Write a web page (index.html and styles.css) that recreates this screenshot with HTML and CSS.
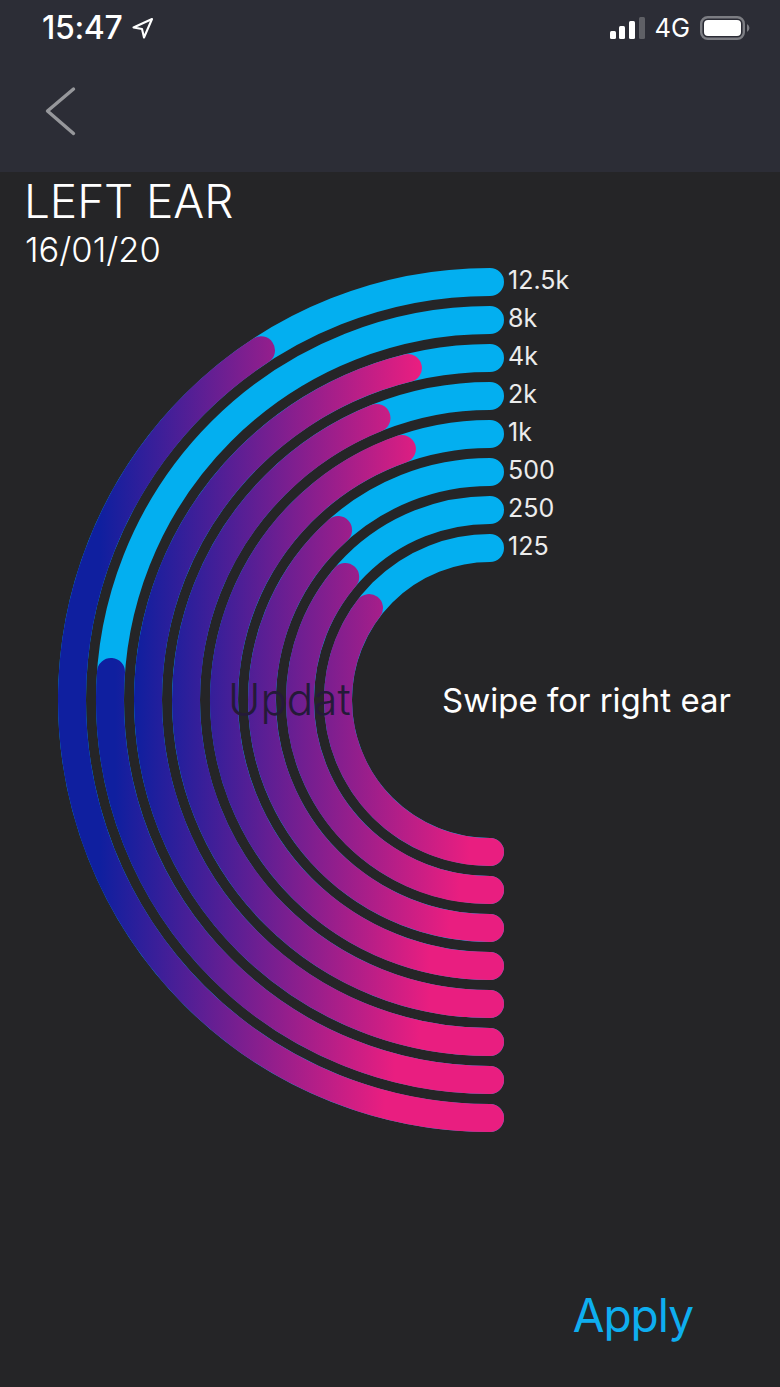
FILE: index.html
```html
<!DOCTYPE html>
<html lang="en">
<head>
<meta charset="utf-8">
<title>Left ear</title>
<link rel="stylesheet" href="styles.css">
</head>
<body>
<div class="phone">
  <header class="topbar">
    <div class="status">
      <div class="status-left">
        <span class="clock">15:47</span>
        <svg class="loc" viewBox="0 0 24 24" width="24" height="24"><path d="M3.5 11.5 L22 3 L14 21.5 L12 13 Z" fill="none" stroke="#fff" stroke-width="2.1" stroke-linejoin="round"/></svg>
      </div>
      <div class="status-right">
        <div class="signal"><i class="b1"></i><i class="b2"></i><i class="b3"></i><i class="b4"></i></div>
        <span class="net">4G</span>
        <svg class="batt" viewBox="0 0 50 24" width="50" height="24"><rect x="1.2" y="1.2" width="42.6" height="21.6" rx="6.5" fill="none" stroke="#7c7d83" stroke-width="2.4"/><rect x="4" y="4" width="37" height="16" rx="4" fill="#fff"/><path d="M47 8 a4.5 4.5 0 0 1 0 8 Z" fill="#7c7d83"/></svg>
      </div>
    </div>
    <div class="nav">
      <svg class="back" viewBox="0 0 34 52" width="34" height="52"><path d="M29.5 3 L3.5 25 L29.5 47.5" fill="none" stroke="#96979b" stroke-width="3.4" stroke-linecap="round" stroke-linejoin="round"/></svg>
    </div>
  </header>
  <main class="content">
    <h1 class="title">LEFT EAR</h1>
    <p class="date">16/01/20</p>
    <section class="stage">
      <svg class="rings" viewBox="0 0 780 1387" width="780" height="1387" aria-hidden="true">
        <defs>
          <linearGradient id="g1" gradientUnits="userSpaceOnUse" x1="100" y1="0" x2="385" y2="0"><stop offset="0" stop-color="#0f1f9f"/><stop offset="1" stop-color="#e91e80"/></linearGradient>
          <linearGradient id="g2" gradientUnits="userSpaceOnUse" x1="115" y1="0" x2="395" y2="0"><stop offset="0" stop-color="#0f1f9f"/><stop offset="1" stop-color="#e91e80"/></linearGradient>
          <linearGradient id="g3" gradientUnits="userSpaceOnUse" x1="135" y1="0" x2="420" y2="0"><stop offset="0" stop-color="#0f1f9f"/><stop offset="1" stop-color="#e91e80"/></linearGradient>
          <linearGradient id="g4" gradientUnits="userSpaceOnUse" x1="150" y1="0" x2="430" y2="0"><stop offset="0" stop-color="#0f1f9f"/><stop offset="1" stop-color="#e91e80"/></linearGradient>
          <linearGradient id="g5" gradientUnits="userSpaceOnUse" x1="165" y1="0" x2="430" y2="0"><stop offset="0" stop-color="#0f1f9f"/><stop offset="1" stop-color="#e91e80"/></linearGradient>
          <linearGradient id="g6" gradientUnits="userSpaceOnUse" x1="165" y1="0" x2="450" y2="0"><stop offset="0" stop-color="#0f1f9f"/><stop offset="1" stop-color="#e91e80"/></linearGradient>
          <linearGradient id="g7" gradientUnits="userSpaceOnUse" x1="175" y1="0" x2="460" y2="0"><stop offset="0" stop-color="#0f1f9f"/><stop offset="1" stop-color="#e91e80"/></linearGradient>
          <linearGradient id="g8" gradientUnits="userSpaceOnUse" x1="185" y1="0" x2="470" y2="0"><stop offset="0" stop-color="#0f1f9f"/><stop offset="1" stop-color="#e91e80"/></linearGradient>
        </defs>
        <g class="track">
          <path d="M490 1118A418 418 0 0 1 490 282"/>
          <path d="M490 1080A380 380 0 0 1 490 320"/>
          <path d="M490 1042A342 342 0 0 1 490 358"/>
          <path d="M490 1004A304 304 0 0 1 490 396"/>
          <path d="M490 966A266 266 0 0 1 490 434"/>
          <path d="M490 928A228 228 0 0 1 490 472"/>
          <path d="M490 890A190 190 0 0 1 490 510"/>
          <path d="M490 852A152 152 0 0 1 490 548"/>
        </g>
        <g class="level">
          <path stroke="url(#g1)" d="M490 1118A418 418 0 0 1 261 350.3"/>
          <path stroke="url(#g2)" d="M490 1080A380 380 0 0 1 111 672"/>
          <path stroke="url(#g3)" d="M490 1042A342 342 0 0 1 407.9 368"/>
          <path stroke="url(#g4)" d="M490 1004A304 304 0 0 1 376.5 418"/>
          <path stroke="url(#g5)" d="M490 966A266 266 0 0 1 401.9 449"/>
          <path stroke="url(#g6)" d="M490 928A228 228 0 0 1 338.1 530"/>
          <path stroke="url(#g7)" d="M490 890A190 190 0 0 1 345.2 577"/>
          <path stroke="url(#g8)" d="M490 852A152 152 0 0 1 369 608"/>
        </g>
      </svg>
      <ul class="freqs">
        <li>12.5k</li><li>8k</li><li>4k</li><li>2k</li><li>1k</li><li>500</li><li>250</li><li>125</li>
      </ul>
      <div class="swipe">Swipe for right ear</div>
      <div class="ghost">Updat</div>
    </section>
    <div class="actions"><button class="apply">Apply</button></div>
  </main>
</div>
</body>
</html>
```
FILE: styles.css
```css
* { box-sizing: border-box; }
html, body { margin: 0; padding: 0; background: #252527; }
.phone {
  width: 780px;
  height: 1387px;
  display: flex;
  flex-direction: column;
  overflow: hidden;
  font-family: Inter, "Liberation Sans", sans-serif;
  color: #fff;
}
.topbar { height: 172px; background: #2c2d36; flex: none; }
.status {
  height: 55px;
  display: flex;
  justify-content: space-between;
  align-items: center;
  padding: 0 30px 0 42px;
}
.status-left { display: flex; align-items: center; gap: 7px; }
.clock { font-size: 32px; font-weight: 500; letter-spacing: -0.3px; }
.status-right { display: flex; align-items: center; gap: 10px; }
.batt { margin-top: 1px; }
.signal { display: flex; align-items: flex-end; gap: 3.6px; height: 22px; }
.signal i { display: block; width: 6px; border-radius: 1.5px; background: #fff; }
.signal .b1 { height: 8px; }
.signal .b2 { height: 13px; }
.signal .b3 { height: 18px; }
.signal .b4 { height: 22px; background: #5f6066; }
.net { font-size: 25.5px; font-weight: 400; }
.nav { padding: 31px 0 0 44px; }
.back { display: block; }
.content { position: relative; flex: 1; padding: 6px 0 0 24px; }
.title { margin: 0; font-size: 46px; line-height: 46px; font-weight: 300; letter-spacing: -0.1px; }
.date { margin: 6px 0 0 1px; font-size: 34.5px; line-height: 40px; font-weight: 300; }
.stage { position: absolute; left: 0; top: -172px; width: 780px; height: 1387px; pointer-events: none; }
.rings { display: block; }
.track path, .level path { fill: none; stroke-width: 28; stroke-linecap: round; }
.track path { stroke: #03aff0; }
.freqs {
  position: absolute;
  left: 508px;
  top: 261px;
  margin: 0;
  padding: 0;
  list-style: none;
  font-size: 25px;
  line-height: 38px;
  color: #ececec;
}
.swipe { position: absolute; left: 442px; top: 679px; font-size: 33px; line-height: 42px; font-weight: 400; color: #fff; white-space: nowrap; }
.ghost { position: absolute; left: 228px; top: 674px; font-size: 44px; line-height: 50px; font-weight: 300; color: #241a38; }
.actions { position: absolute; right: 87px; bottom: 42px; }
.apply { background: none; border: 0; padding: 0; font: 400 46px/60px Inter, "Liberation Sans", sans-serif; letter-spacing: -1px; color: #0eaeef; }
```
